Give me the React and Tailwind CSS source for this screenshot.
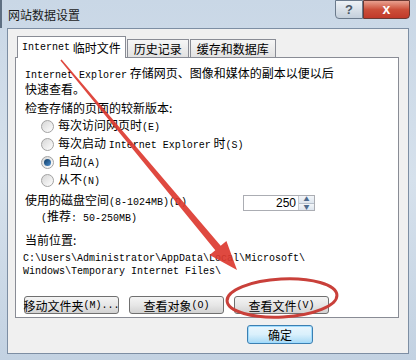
import React from "react";

const L = ({ children }) => (
  <span className="font-['Liberation_Mono'] text-[10px]">{children}</span>
);

const Radio = ({ checked, children }) => (
  <div className="flex items-center h-[18px] ml-[16px]">
    <span className="flex items-center justify-center w-[13px] h-[13px] rounded-full border border-[#a2a2a2] bg-gradient-to-br from-[#d6d6d6] to-[#ffffff]">
      {checked && (
        <span className="w-[7px] h-[7px] rounded-full bg-gradient-to-br from-[#0f3d66] to-[#4c8fcf]" />
      )}
    </span>
    <span className="ml-[4px]">{children}</span>
  </div>
);

const Button = ({ children, className = "" }) => (
  <button
    className={
      "flex items-center justify-center h-[18px] w-[95px] rounded-[3px] border border-[#707070] bg-gradient-to-b from-[#f4f4f4] via-[#e7e7e7] to-[#d2d2d2] whitespace-nowrap " +
      className
    }
  >
    {children}
  </button>
);

const App = () => {
  return (
    <div className="relative w-[416px] h-[360px] overflow-hidden bg-gradient-to-b from-[#c9d7e6] via-[#d6e1ec] to-[#c3d2e2] font-['Noto_Sans_CJK_SC',sans-serif] text-[12px] text-black leading-[13px]">
      {/* title bar */}
      <div className="flex justify-between h-[28px] border-l-2 border-[#5e6f82]">
        <div className="pl-[6px] pt-[8px] text-[12px] text-[#1b1b1b]">网站数据设置</div>
        <div className="flex h-[19px] mr-[6px]">
          <div className="flex items-center justify-center w-[28px] rounded-bl-[4px] border border-[#6b7a8c] bg-gradient-to-b from-[#eef2f6] to-[#c4cfdb] text-[#4b5866] font-['Liberation_Sans'] font-bold text-[13px]">
            ?
          </div>
          <div className="flex items-center justify-center w-[47px] rounded-br-[4px] border border-[#6b3a34] bg-gradient-to-b from-[#e8a08f] via-[#cc4f3a] to-[#c1392a] text-white font-['Liberation_Sans'] font-bold text-[14px]">
            x
          </div>
        </div>
      </div>

      {/* client area */}
      <div className="ml-[7px] w-[402px] h-[326px] border border-[#7d8ea3] bg-[#f0f0f0]">
        {/* tabs */}
        <div className="flex items-end h-[21px] mt-[7px] pl-[9px]">
          <div className="relative z-10 flex items-center h-[22px] -mb-[1px] px-[4px] border border-b-0 border-[#898c95] bg-white">
            <L>Internet</L>&nbsp;临时文件
          </div>
          <div className="flex items-center h-[18px] ml-[1px] px-[6px] border border-b-0 border-[#898c95] bg-gradient-to-b from-[#f6f6f6] to-[#e2e2e2]">
            历史记录
          </div>
          <div className="flex items-center h-[18px] ml-[1px] px-[6px] border border-b-0 border-[#898c95] bg-gradient-to-b from-[#f6f6f6] to-[#e2e2e2]">
            缓存和数据库
          </div>
        </div>

        {/* panel */}
        <div className="ml-[7px] w-[384px] h-[261px] border border-[#898c95] bg-white pl-[9px] pt-[8px]">
          <div>
            <L>Internet Explorer</L> 存储网页、图像和媒体的副本以便以后
          </div>
          <div>快速查看。</div>
          <div className="mt-[6px]">检查存储的页面的较新版本:</div>
          <div className="mt-[3px]">
            <Radio>
              每次访问网页时<L>(E)</L>
            </Radio>
            <Radio>
              每次启动 <L>Internet Explorer</L> 时<L>(S)</L>
            </Radio>
            <Radio checked>
              自动<L>(A)</L>
            </Radio>
            <Radio>
              从不<L>(N)</L>
            </Radio>
          </div>
          <div className="flex items-start mt-[4px]">
            <div className="w-[218px] leading-[13px]">
              <div>
                使用的磁盘空间<L>(8-1024MB)(D)</L>
              </div>
              <div className="pl-[16px]">
                <L>(</L>推荐<L>: 50-250MB)</L>
              </div>
            </div>
            <div className="flex mt-[2px] w-[72px] h-[16px] border border-[#abadb3] bg-white">
              <div className="flex-1 text-right pr-[2px] font-['Liberation_Sans'] text-[12px] leading-[14px]">
                250
              </div>
              <div className="flex flex-col w-[16px] border-l border-[#c8ccd2]">
                <div className="flex-1 flex items-center justify-center bg-gradient-to-b from-[#f3f6f9] to-[#dde5ee] border-b border-[#b7c0cb] text-[#4d6a8c] text-[6px] leading-[6px]">
                  ▲
                </div>
                <div className="flex-1 flex items-center justify-center bg-gradient-to-b from-[#f3f6f9] to-[#dde5ee] text-[#4d6a8c] text-[6px] leading-[6px]">
                  ▼
                </div>
              </div>
            </div>
          </div>
          <div className="mt-[8px]">当前位置:</div>
          <div className="mt-[6px] -ml-[2px] font-['Liberation_Mono'] text-[10px]">
            <div>C:\Users\Administrator\AppData\Local\Microsoft\</div>
            <div>Windows\Temporary Internet Files\</div>
          </div>
          <div className="flex gap-[10px] mt-[18px] -ml-[1px]">
            <Button>
              移动文件夹<L>(M)...</L>
            </Button>
            <Button>
              查看对象<L>(O)</L>
            </Button>
            <Button>
              查看文件<L>(V)</L>
            </Button>
          </div>
        </div>

        {/* OK */}
        <div className="flex mt-[7px] ml-[239px]">
          <button className="flex items-center justify-center w-[66px] h-[19px] rounded-[3px] border border-[#3c7fb1] bg-gradient-to-b from-[#eaf6fd] via-[#d9f0fc] to-[#a7d9f5] shadow-[inset_0_0_0_1px_#9fdcff]">
            确定
          </button>
        </div>
      </div>

      {/* annotation */}
      <svg
        className="absolute inset-0 pointer-events-none"
        width="416"
        height="360"
        viewBox="0 0 416 360"
      >
        <polygon
          points="60.4,60.5 215.3,250.3 209.6,255.1 237,270 226.4,240.9 220.7,245.7 61.6,59.5"
          fill="#dc3a30"
          opacity="0.92"
        />
        <ellipse
          cx="282"
          cy="298"
          rx="55"
          ry="19"
          fill="none"
          stroke="#c9403a"
          strokeWidth="3"
          transform="rotate(-3 282 298)"
        />
      </svg>
    </div>
  );
};

export default App;
